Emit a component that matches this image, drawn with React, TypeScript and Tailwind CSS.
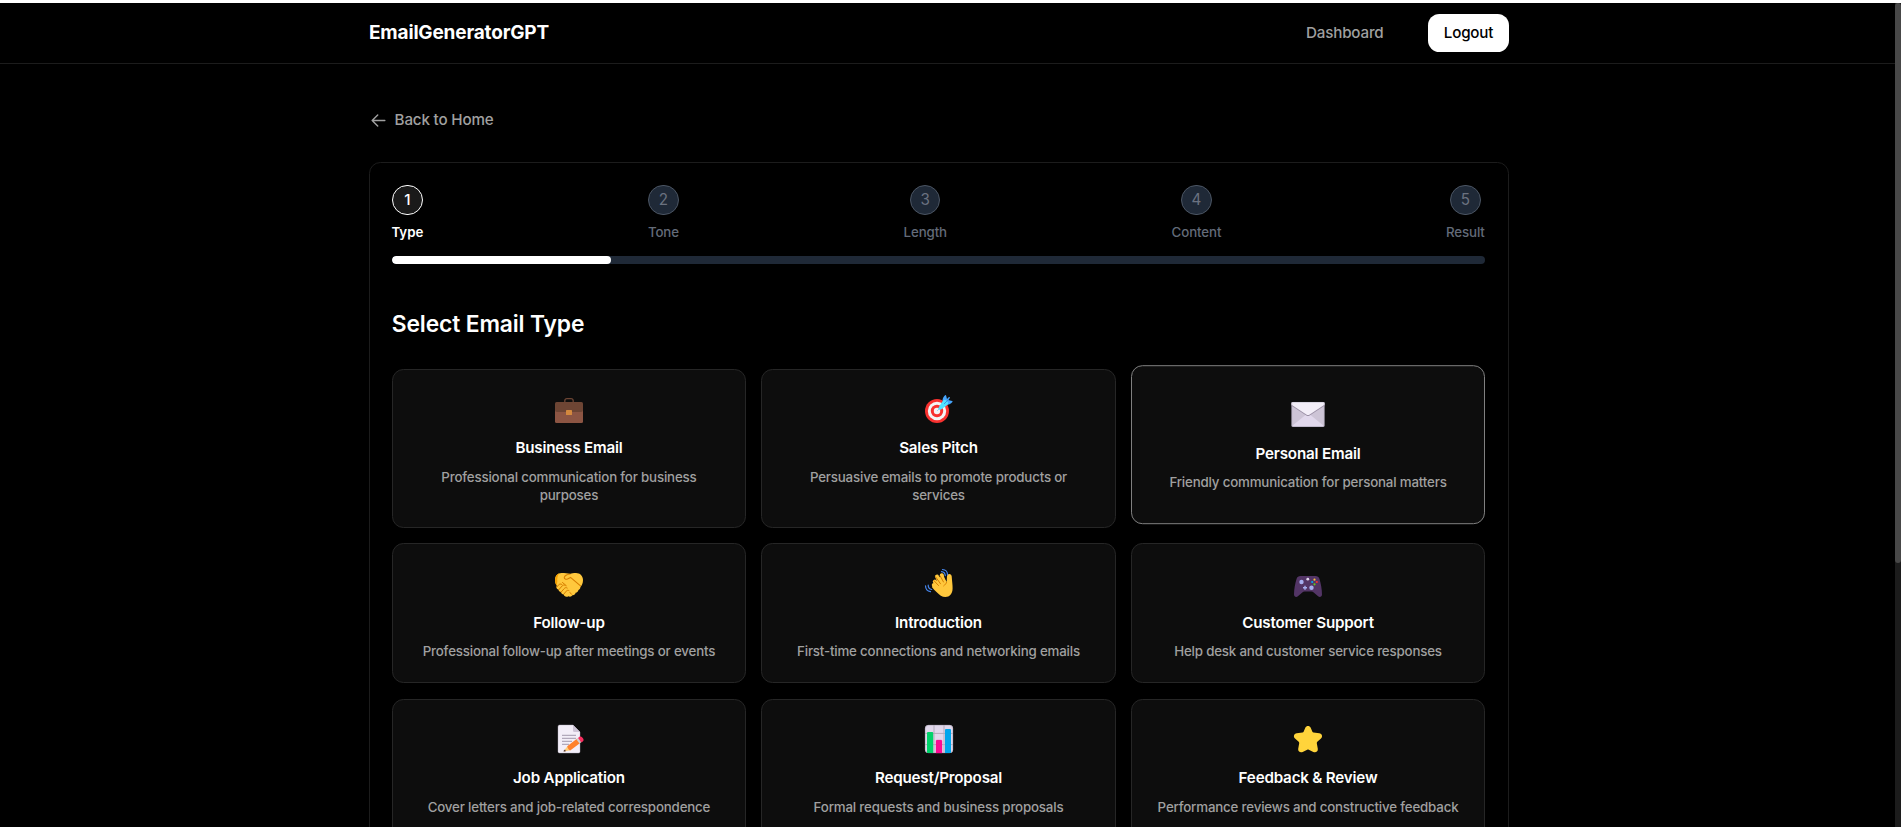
import type { ReactNode } from 'react';

const Briefcase = (
  <>
    <path d="M11.8 10V7.6A2.2 2.2 0 0 1 14 5.6h4a2.2 2.2 0 0 1 2.2 2V10" fill="none" stroke="#6D4534" strokeWidth="1.3" />
    <path d="M2 17h28v11.5a1.5 1.5 0 0 1-1.5 1.5h-25A1.5 1.5 0 0 1 2 28.5z" fill="#8C5543" />
    <path d="M3.5 9h25A1.5 1.5 0 0 1 30 10.500V17a2 2 0 0 1-2 2H4a2 2 0 0 1-2-2v-6.500A1.500 1.500 0 0 1 3.500 9z" fill="#6D4534" />
    <rect x="13" y="17" width="6" height="5" rx="0.6" fill="#D3883E" />
  </>
);

const Target = (
  <>
    <circle cx="14" cy="18" r="12" fill="#F8312F" />
    <circle cx="14" cy="18" r="9.200" fill="#F4F4F4" />
    <circle cx="14" cy="18" r="6.200" fill="#F8312F" />
    <circle cx="14" cy="18" r="3.200" fill="#F4F4F4" />
    <path d="M14 18l6-6" stroke="#83CBFF" strokeWidth="0.8" />
    <path d="M19.500 7.500c0-2 1.200-4.300 2.600-5.300.4-.3.9 0 1 .4l.9 3.400 1.700-1.700c.7-.6 1.600.3 1 1l-1.600 1.700 4 1c.5.100.7.700.3 1.100-1.500 1.700-4 3-6.400 3z" fill="#46A4FB" />
    <path d="M15.300 15.500c0-1 4.200-7.700 5.600-8.600.8-.5 1.500-.2 2.100.4l1.800 1.800c.6.600.6 1.400 0 2.100-1.200 1.500-6.600 5.600-8 5.600-.9 0-1.500-.5-1.500-1.300z" fill="#50E2FF" />
    <path d="M21 11l5-5" stroke="#2D86E0" strokeWidth="0.8" />
  </>
);

const Envelope = (
  <>
    <rect x="1" y="5" width="30" height="22.500" rx="1" fill="#CDC4D6" />
    <path d="M1.500 26.800L14 16.500h4l12.500 10.300c-.3.400-.6.700-1 .7h-27c-.400 0-.7-.3-1-.7z" fill="#E1D8EC" />
    <path d="M1 8.300l13.800 9c.8.500 1.600.5 2.400 0L31 8.300V6.800H1z" fill="#998EA4" />
    <path d="M1 7.400l13.800 9c.8.500 1.600.5 2.400 0L31 7.400V6a1 1 0 0 0-1-1H2a1 1 0 0 0-1 1z" fill="#F3EEF8" />
    <rect x="1.250" y="5.250" width="29.500" height="22" rx="1" fill="none" stroke="#9B93A8" strokeOpacity="0.6" strokeWidth="0.500" />
  </>
);

const Handshake = (
  <>
    <path d="M8.500 6C4.500 6 2 9 2 13c0 2.500.8 4.300 1.700 5.500l-.3 1.500c0 1.300.9 2.300 2.100 2.400.1 1.400 1.100 2.500 2.500 2.600.2 1.400 1.200 2.300 2.600 2.300.3 1.500 1.400 2.500 2.900 2.500.7 0 1.400-.2 1.900-.6 1.500.900 3.300.4 4-1 1.600.2 3-.9 3.200-2.500 1.600-.1 2.700-1.200 2.800-2.700 1.300-.4 2.100-1.500 2-2.900C29 18.500 30 16 30 13c0-4.200-3-7-7-7-2.600 0-4.500.2-6 .9C14.800 6.100 12 6 8.500 6z" fill="#FFC83D" />
    <path d="M2 13c0-3.300 1.600-5.900 4.300-6.700C4.600 8.600 4 11.500 4.300 14.500l-.6 4C2.800 17.300 2 15.500 2 13z" fill="#F59F00" />
    <path d="M17 7c-2 .2-5.500 1.500-5.700 3.500-.2 1.700 1.700 2.100 3.200 1.400l3-1.500 10 8.400" fill="none" stroke="#D67D00" strokeWidth="1.100" strokeLinecap="round" strokeLinejoin="round" />
    <path d="M9 17.500c-1.300-1-2.800-.5-3.600.6l-1.600 2M12.200 18.500c-1.300-.8-2.300-.5-3.100.5l-3.400 3.800M14.200 21c-1.200-.7-2.200-.4-3 .6L8.200 25M16 23.600c-1-.6-2-.3-2.800.6L11 27M17 25.500l1.500 1.800M9.500 15.500l3.800 3.200" fill="none" stroke="#D67D00" strokeWidth="1" strokeLinecap="round" />
  </>
);

const Wave = (
  <>
    <g fill="none" stroke="#FFC83D" strokeLinecap="round" strokeWidth="4">
      <path d="M18 18L14 9.500" />
      <path d="M20 15L18.800 8.200" />
      <path d="M16 20L11.800 14.500" />
      <path d="M17 24l-6.200-6" />
    </g>
    <path d="M17.500 8.500c1.300-.6 2.500-.2 3.200 1l3 5.500.3-6c.1-1.300 1-2.100 2.300-2.100 1.400 0 2.300 1 2.400 2.300.300 5 1 8.700.9 12.300C29.500 26.800 26.500 30 22.500 30c-3.500 0-6-2-9-5-1.900-1.800-3.500-3.500-4.600-5.100L13 15z" fill="#FFC83D" />
    <path d="M10.800 13.500l4.700 5M12.600 9.800l4.900 7M17.200 9l3.300 6M23.500 15.500c-.6 1.500-1.700 2.400-2.700 3.300" fill="none" stroke="#D67D00" strokeWidth="1" strokeLinecap="round" />
    <path d="M18.500 4.600c2 .2 3.600 1.800 3.800 4M19.500 2.500c3 .2 5 2.500 5 5.300M5.200 18.200c0 2.300 1.300 3.800 3.500 4.300M2.500 18.800c.1 3.300 2 5.500 5 5.900" fill="none" stroke="#4686EC" strokeWidth="1.200" strokeLinecap="round" />
  </>
);

const Gamepad = (
  <>
    <path d="M8.500 9h15c2 0 3.300 1 3.900 2.800C28.900 16.300 30 22.500 30 27.500c0 2.300-2.200 3.300-3.900 1.800l-4.400-3.900c-.7-.6-1.300-.9-2.200-.9h-7c-.900 0-1.500.3-2.200.9l-4.400 3.900C4.200 30.800 2 29.800 2 27.500c0-5 1.100-11.200 2.600-15.700C5.200 10 6.500 9 8.500 9z" fill="#533566" />
    <circle cx="9.500" cy="15" r="2.200" fill="#A6AEEF" />
    <circle cx="19.500" cy="20.700" r="2.200" fill="#A6AEEF" />
    <path d="M13 18.700v4M11 20.700h4" stroke="#A6AEEF" strokeWidth="1.400" />
    <circle cx="15.800" cy="12.200" r="1.400" fill="#E1D8EC" />
    <circle cx="22.500" cy="12.700" r="1.100" fill="#F9C23C" />
    <circle cx="20.200" cy="15" r="1.100" fill="#00A6ED" />
    <circle cx="24.800" cy="15" r="1.100" fill="#F8312F" />
    <circle cx="22.500" cy="17.300" r="1.100" fill="#62C914" />
  </>
);

const Memo = (
  <>
    <path d="M6.500 2H20l7 7v19.500a1.500 1.500 0 0 1-1.500 1.500h-19A1.500 1.500 0 0 1 5 28.500v-25A1.500 1.500 0 0 1 6.500 2z" fill="#F3EEF8" stroke="#B4ACBC" strokeWidth="0.400" />
    <path d="M20 2l7 7h-5.500A1.500 1.500 0 0 1 20 7.500z" fill="#CDC4D6" />
    <path d="M9 12.300h14M9 15.300h14M9 18.300h10M9 21.300h7" stroke="#998EA4" strokeWidth="0.900" />
    <path d="M14.500 23.200l-3.700 4.500c-.4.500 0 1 .6.900l5.600-1.300z" fill="#FFCE7C" />
    <path d="M12 26.500l-1.300 1.300c-.3.500 0 .9.600.8l1.500-.4z" fill="#402A32" />
    <path d="M14.200 23.200l10-7.700 3.300 4.300-10.300 7.800c-1.400-.8-2.400-2.400-3-4.400z" fill="#FF822D" />
    <path d="M23.300 16.200l1.700-1.300 3.300 4.200-1.800 1.400z" fill="#D3D3D3" />
    <path d="M25 14.900l1.100-.9c1-.8 2.400-.6 3.200.4l.8 1c.8 1 .6 2.300-.4 3.100l-1.300 1z" fill="#F92F60" />
  </>
);

const BarChart = (
  <>
    <rect x="2" y="2" width="28" height="28" rx="3.500" fill="#E1D8EC" />
    <path d="M2 10.400h28M2 21.600h28M11 2v28M21 2v28" stroke="#B4ACBC" strokeWidth="1" />
    <rect x="2.300" y="2.300" width="27.400" height="27.400" rx="3.200" fill="none" stroke="#B4ACBC" strokeWidth="0.600" />
    <path d="M4 10a1 1 0 0 1 1-1h4.200a1 1 0 0 1 1 1v20H5l-1-.3z" fill="#00D26A" />
    <path d="M13 18a1 1 0 0 1 1-1h4a1 1 0 0 1 1 1v12h-6z" fill="#FC0A92" stroke="#FC0A92" strokeWidth="0.300" />
    <path d="M22 7a1 1 0 0 1 1-1h4a1 1 0 0 1 1 1v22.700l-1 .3h-5z" fill="#00A6ED" />
  </>
);

const Star = (
  <path
    d="M13.300 4.800c1-2.400 4.400-2.400 5.400 0l1.700 3.900c.2.500.6.800 1.100.9l5.800.7c2.700.3 3.700 3.500 1.700 5.200l-3.700 3.300c-.4.400-.6.900-.5 1.400l1 5.500c.500 2.700-2.200 4.400-4.500 3.200l-4.500-2.100c-.5-.3-1.100-.3-1.600 0l-4.500 2.100C8.400 30.100 5.700 28.400 6.200 25.700l1-5.500c.1-.5-.1-1-.5-1.400L3 15.500c-2-1.700-1-4.900 1.700-5.200l5.800-.7c.5-.1.900-.4 1.100-.9z"
    fill="#FFD43B"
  />
);

type EmailType = { title: string; text: string; art: ReactNode; active?: boolean };

const types: EmailType[] = [
  { title: 'Business Email', text: 'Professional communication for business purposes', art: Briefcase },
  { title: 'Sales Pitch', text: 'Persuasive emails to promote products or services', art: Target },
  { title: 'Personal Email', text: 'Friendly communication for personal matters', art: Envelope, active: true },
  { title: 'Follow-up', text: 'Professional follow-up after meetings or events', art: Handshake },
  { title: 'Introduction', text: 'First-time connections and networking emails', art: Wave },
  { title: 'Customer Support', text: 'Help desk and customer service responses', art: Gamepad },
  { title: 'Job Application', text: 'Cover letters and job-related correspondence', art: Memo },
  { title: 'Request/Proposal', text: 'Formal requests and business proposals', art: BarChart },
  { title: 'Feedback & Review', text: 'Performance reviews and constructive feedback', art: Star },
];

const steps = ['Type', 'Tone', 'Length', 'Content', 'Result'];

function TypeCard({ item }: { item: EmailType }) {
  return (
    <button
      className={
        'flex flex-col items-center justify-center rounded-[11.4px] border bg-[#0d0d0d] px-[22.8px] pt-[23.2px] pb-[21.8px] text-center ' +
        (item.active ? '-translate-y-[3.8px] border-[#808080]' : 'border-[#262626]')
      }
    >
      <svg viewBox="0 0 32 32" className={'mb-[12.6px] size-8 shrink-0 ' + (item.active ? 'scale-110' : '')}>
        {item.art}
      </svg>
      <span className="mb-[7.6px] text-[15.2px] leading-[22.8px] font-semibold tracking-[-0.2px] text-white">{item.title}</span>
      <span className="text-[13.3px] leading-[18.6px] font-medium tracking-[-0.17px] text-[#a0a0a0]">{item.text}</span>
    </button>
  );
}

export default function App() {
  return (
    <div className="flex h-[827px] w-full flex-col overflow-hidden bg-black font-[Inter,sans-serif] text-white">
      <div className="h-[3px] shrink-0 bg-white" />
      <div className="flex min-h-0 flex-1">
        <div className="min-w-0 flex-1 overflow-hidden">
          <header className="h-[61px] border-b border-[#1c1c1c] pr-[17px]">
            <div className="mx-auto flex h-full w-[1140px] items-center justify-between">
              <span className="text-[19px] font-bold tracking-[-0.17px]">EmailGeneratorGPT</span>
              <nav className="flex items-center gap-[44.5px] text-[15.2px] font-medium tracking-[-0.2px]">
                <a className="text-[#a0a0a0]">Dashboard</a>
                <button className="h-[38px] w-[81px] rounded-[11.4px] bg-white text-black">Logout</button>
              </nav>
            </div>
          </header>
          <main className="pr-[17px]">
            <div className="mx-auto w-[1140px]">
              <a className="mt-[45px] flex items-center gap-[6.6px] text-[15.2px] leading-[22.8px] font-medium tracking-[-0.18px] text-[#a0a0a0]">
                <svg viewBox="0 0 24 24" className="size-[19px]" fill="none" stroke="currentColor" strokeWidth="1.800" strokeLinecap="round" strokeLinejoin="round">
                  <path d="M20 12H4M11 19l-7-7 7-7" />
                </svg>
                Back to Home
              </a>
              <section className="mt-[30px] h-[900px] rounded-[11.4px] border border-[#1c1c1c] pr-[22.8px] pl-[21.8px] pt-[22.300px]">
                <div className="-ml-[0.4px] flex justify-between pr-[0.4px]">
                  {steps.map((label, i) => (
                    <div key={label} className="flex flex-col items-center">
                      <div
                        className={
                          'flex size-[30.4px] items-center justify-center rounded-full border text-[15.2px] ' +
                          (i === 0 ? 'border-white bg-[#1a1a1a] font-medium text-white' : 'border-[#4b5563] bg-[#1f2937] text-[#6b7280]')
                        }
                      >
                        {i + 1}
                      </div>
                      <span
                        className={
                          'mt-[7.6px] text-[13.3px] leading-[19px] ' +
                          (i === 0 ? 'font-semibold text-white' : 'font-medium tracking-[-0.1px] text-[#636b79]')
                        }
                      >
                        {label}
                      </span>
                    </div>
                  ))}
                </div>
                <div className="mt-[14px] h-2 overflow-hidden rounded-full bg-[#1f2937]">
                  <div className="h-full w-[219px] rounded-full bg-white" />
                </div>
                <h2 className="mt-[45px] text-[22.8px] leading-[30.4px] font-semibold tracking-[-0.13px]">Select Email Type</h2>
                <div className="mt-[29.1px] grid grid-cols-3 gap-[15.2px]">
                  {types.map((item) => (
                    <TypeCard key={item.title} item={item} />
                  ))}
                </div>
              </section>
            </div>
          </main>
        </div>
        <div className="w-[6px] shrink-0 bg-[#1c1c1c]">
          <div className="h-[560px] rounded-[3px] bg-[#484848]" />
        </div>
      </div>
    </div>
  );
}
